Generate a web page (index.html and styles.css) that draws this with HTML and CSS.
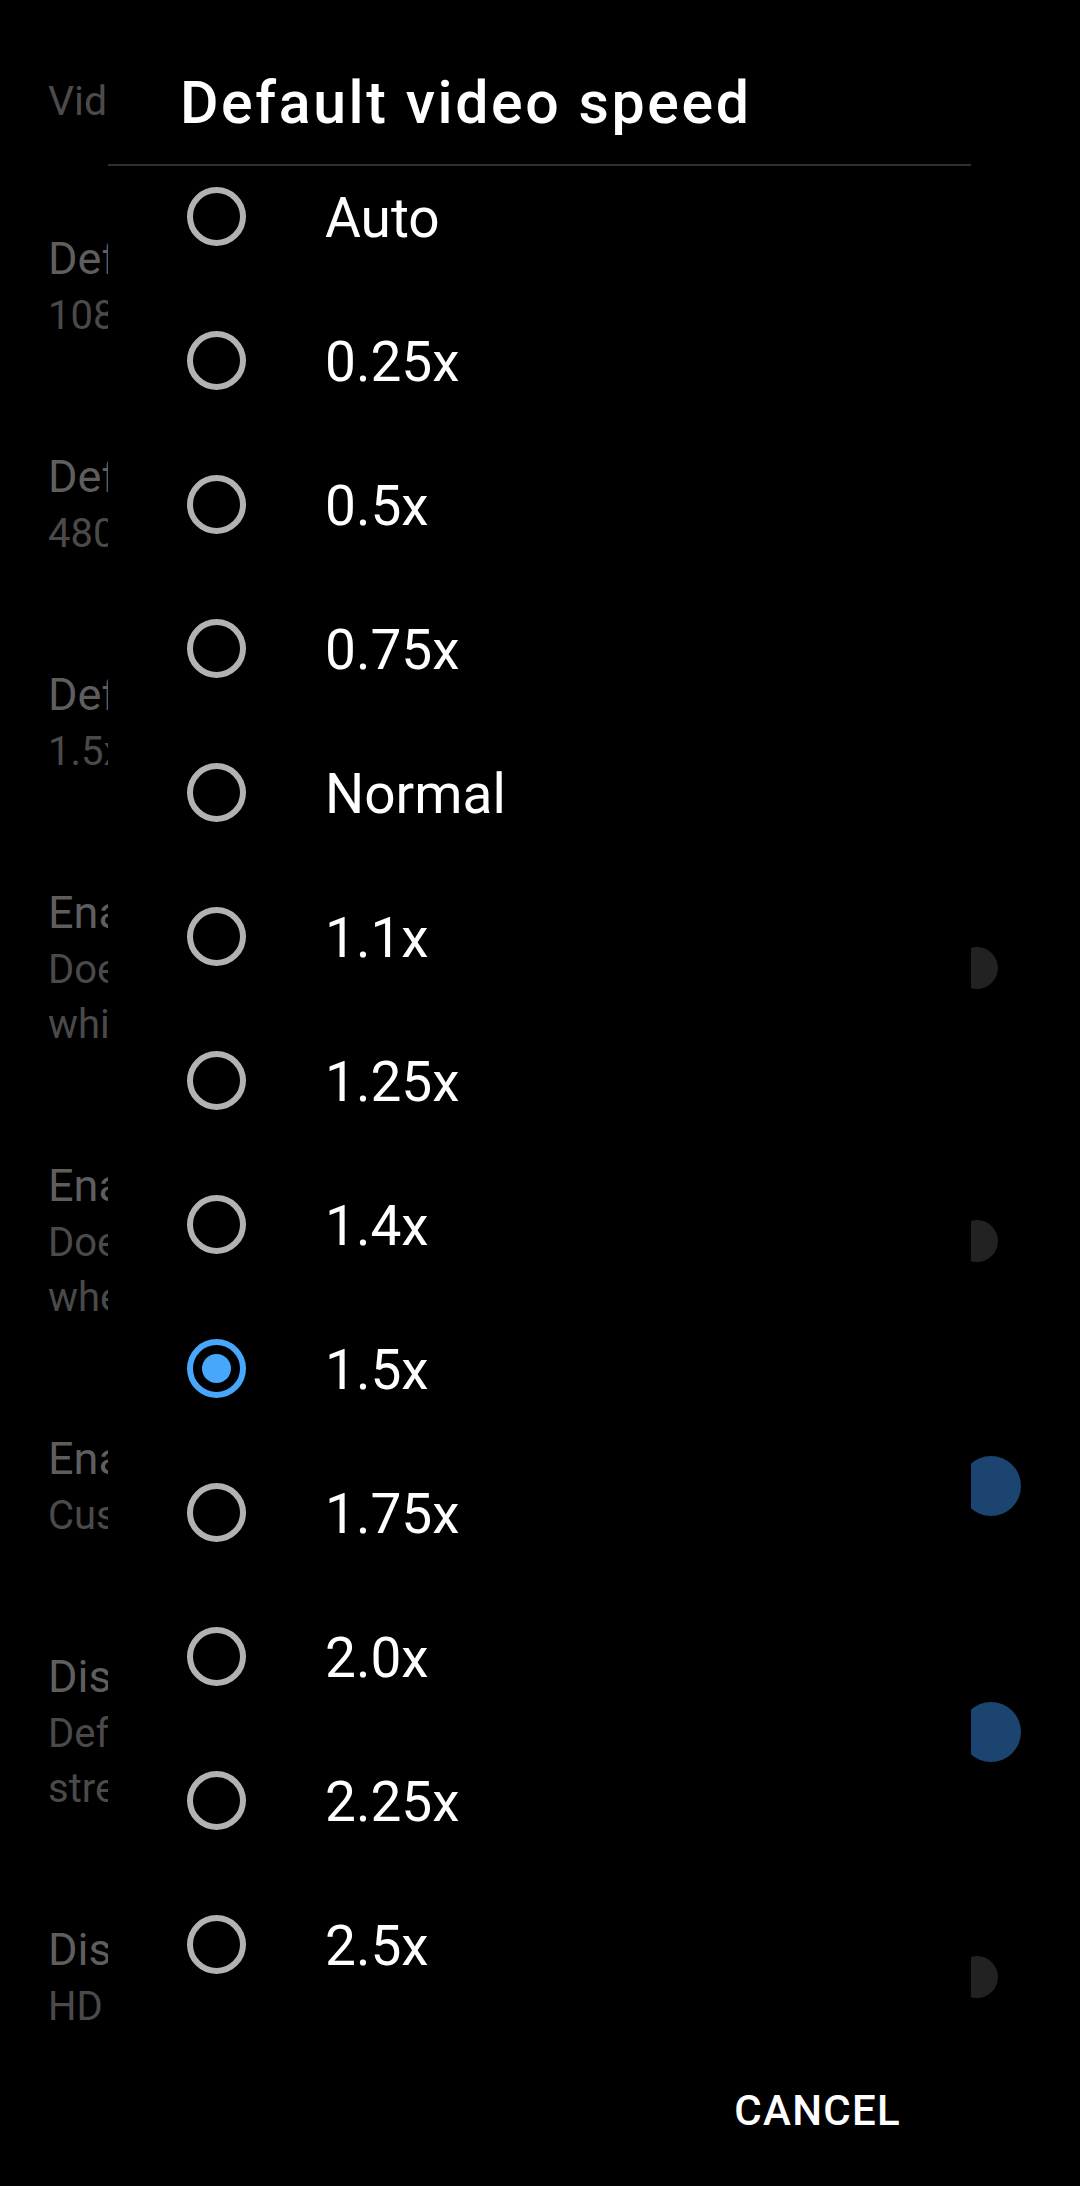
FILE: index.html
```html
<!DOCTYPE html>
<html lang="en">
<head>
<meta charset="utf-8">
<title>Default video speed</title>
<link rel="stylesheet" href="styles.css">
</head>
<body>
<div class="screen">
  <div class="settings">
    <div class="category">Video</div>
    <div class="pref">
      <div class="pref-text">
        <div class="pref-title">Default resolution</div>
        <div class="pref-summary">1080p60</div>
      </div>
    </div>
    <div class="pref">
      <div class="pref-text">
        <div class="pref-title">Default resolution on mobile data</div>
        <div class="pref-summary">480p</div>
      </div>
    </div>
    <div class="pref">
      <div class="pref-text">
        <div class="pref-title">Default video speed</div>
        <div class="pref-summary">1.5x</div>
      </div>
    </div>
    <div class="pref">
      <div class="pref-text">
        <div class="pref-title">Enable audio only</div>
        <div class="pref-summary">Does not load the video track,</div>
        <div class="pref-summary">which saves data</div>
      </div>
      <div class="switch"><span class="thumb off"></span></div>
    </div>
    <div class="pref">
      <div class="pref-text">
        <div class="pref-title">Enable background play</div>
        <div class="pref-summary">Does not pause playback</div>
        <div class="pref-summary">when the app is minimized</div>
      </div>
      <div class="switch"><span class="thumb off"></span></div>
    </div>
    <div class="pref">
      <div class="pref-text">
        <div class="pref-title">Enable SponsorBlock</div>
        <div class="pref-summary">Custom segments are skipped</div>
      </div>
      <div class="switch"><span class="thumb on"></span></div>
    </div>
    <div class="pref">
      <div class="pref-text">
        <div class="pref-title">Display chapters</div>
        <div class="pref-summary">Default for videos and live</div>
        <div class="pref-summary">streams</div>
      </div>
      <div class="switch"><span class="thumb on"></span></div>
    </div>
    <div class="pref">
      <div class="pref-text">
        <div class="pref-title">Display quality badge</div>
        <div class="pref-summary">HD and 4K labels</div>
      </div>
      <div class="switch"><span class="thumb off"></span></div>
    </div>
  </div>

  <div class="dialog">
    <h1 class="dialog-title">Default video speed</h1>
    <div class="divider"></div>
    <div class="dialog-list">
      <ul class="options">
        <li class="option"><span class="radio"></span><span class="option-label">Auto</span></li>
        <li class="option"><span class="radio"></span><span class="option-label">0.25x</span></li>
        <li class="option"><span class="radio"></span><span class="option-label">0.5x</span></li>
        <li class="option"><span class="radio"></span><span class="option-label">0.75x</span></li>
        <li class="option"><span class="radio"></span><span class="option-label">Normal</span></li>
        <li class="option"><span class="radio"></span><span class="option-label">1.1x</span></li>
        <li class="option"><span class="radio"></span><span class="option-label">1.25x</span></li>
        <li class="option"><span class="radio"></span><span class="option-label">1.4x</span></li>
        <li class="option"><span class="radio checked"><span class="dot"></span></span><span class="option-label">1.5x</span></li>
        <li class="option"><span class="radio"></span><span class="option-label">1.75x</span></li>
        <li class="option"><span class="radio"></span><span class="option-label">2.0x</span></li>
        <li class="option"><span class="radio"></span><span class="option-label">2.25x</span></li>
        <li class="option"><span class="radio"></span><span class="option-label">2.5x</span></li>
      </ul>
    </div>
    <div class="dialog-actions">
      <button class="text-button" type="button">CANCEL</button>
    </div>
  </div>
</div>
</body>
</html>
```

FILE: styles.css
```css
* { box-sizing: border-box; }

html, body {
  margin: 0;
  padding: 0;
  background: #000;
}

body {
  font-family: Roboto, "Noto Sans", "Liberation Sans", sans-serif;
  color: #fff;
}

.screen {
  position: relative;
  width: 1080px;
  height: 2186px;
  overflow: hidden;
  background: #000;
}

/* ---------- underlying settings list (dimmed, mostly hidden by the dialog) ---------- */
.settings {
  display: flex;
  flex-direction: column;
}

.category {
  width: 108px;
  overflow: hidden;
  padding: 76px 0 0 48px;
  margin-bottom: 51px;
  font-size: 41px;
  line-height: 50px;
  color: #4b4b4b;
  white-space: nowrap;
}

.pref {
  display: flex;
  align-items: center;
  padding: 52px 40px 52px 48px;
}

.pref-text {
  flex: none;
  width: 60px;
  overflow: hidden;
}

.pref-title {
  font-size: 45px;
  line-height: 59px;
  color: #5e5e5e;
  white-space: nowrap;
  overflow: hidden;
}

.pref-summary {
  font-size: 40px;
  line-height: 55px;
  color: #4a4a4a;
  white-space: nowrap;
  overflow: hidden;
}

.switch {
  flex: none;
  margin-left: auto;
  width: 100px;
  height: 84px;
  display: flex;
  align-items: center;
}

.thumb {
  display: block;
  border-radius: 50%;
}

.thumb.off {
  width: 42px;
  height: 42px;
  margin-left: 16px;
  background: #222222;
}

.thumb.on {
  width: 60px;
  height: 60px;
  margin-left: 21px;
  background: #1b4570;
}

/* ---------- dialog ---------- */
.dialog {
  position: absolute;
  top: 0;
  left: 108px;
  width: 863px;
  height: 2186px;
  background: #000;
  display: flex;
  flex-direction: column;
}

.dialog-title {
  margin: 0;
  padding: 68px 0 0 72px;
  font-size: 59px;
  line-height: 70px;
  font-weight: 500;
  color: #fff;
  letter-spacing: 2.6px;
  white-space: nowrap;
}

.divider {
  margin-top: 26px;
  height: 2px;
  background: #2f2f2f;
}

.dialog-list {
  height: 1850px;
  overflow: hidden;
}

.options {
  list-style: none;
  margin: -22px 0 0 0;
  padding: 0;
}

.option {
  height: 144px;
  display: flex;
  align-items: center;
  padding-left: 79px;
}

.radio {
  flex: none;
  width: 59px;
  height: 59px;
  border-radius: 50%;
  border: 6.5px solid #b2b2b2;
  display: flex;
  align-items: center;
  justify-content: center;
}

.radio.checked {
  border-color: #47a7fb;
}

.dot {
  width: 29px;
  height: 29px;
  border-radius: 50%;
  background: #47a7fb;
}

.option-label {
  margin-left: 79px;
  padding-top: 4px;
  font-size: 55px;
  line-height: 64px;
  color: #fff;
}

.dialog-actions {
  display: flex;
  justify-content: flex-end;
  padding: 70px 70px 0 0;
}

.text-button {
  background: none;
  border: 0;
  padding: 0;
  margin: 0;
  font-family: Roboto, "Noto Sans", "Liberation Sans", sans-serif;
  font-size: 42px;
  line-height: 50px;
  font-weight: 500;
  color: #fff;
  letter-spacing: 1.3px;
}
```
